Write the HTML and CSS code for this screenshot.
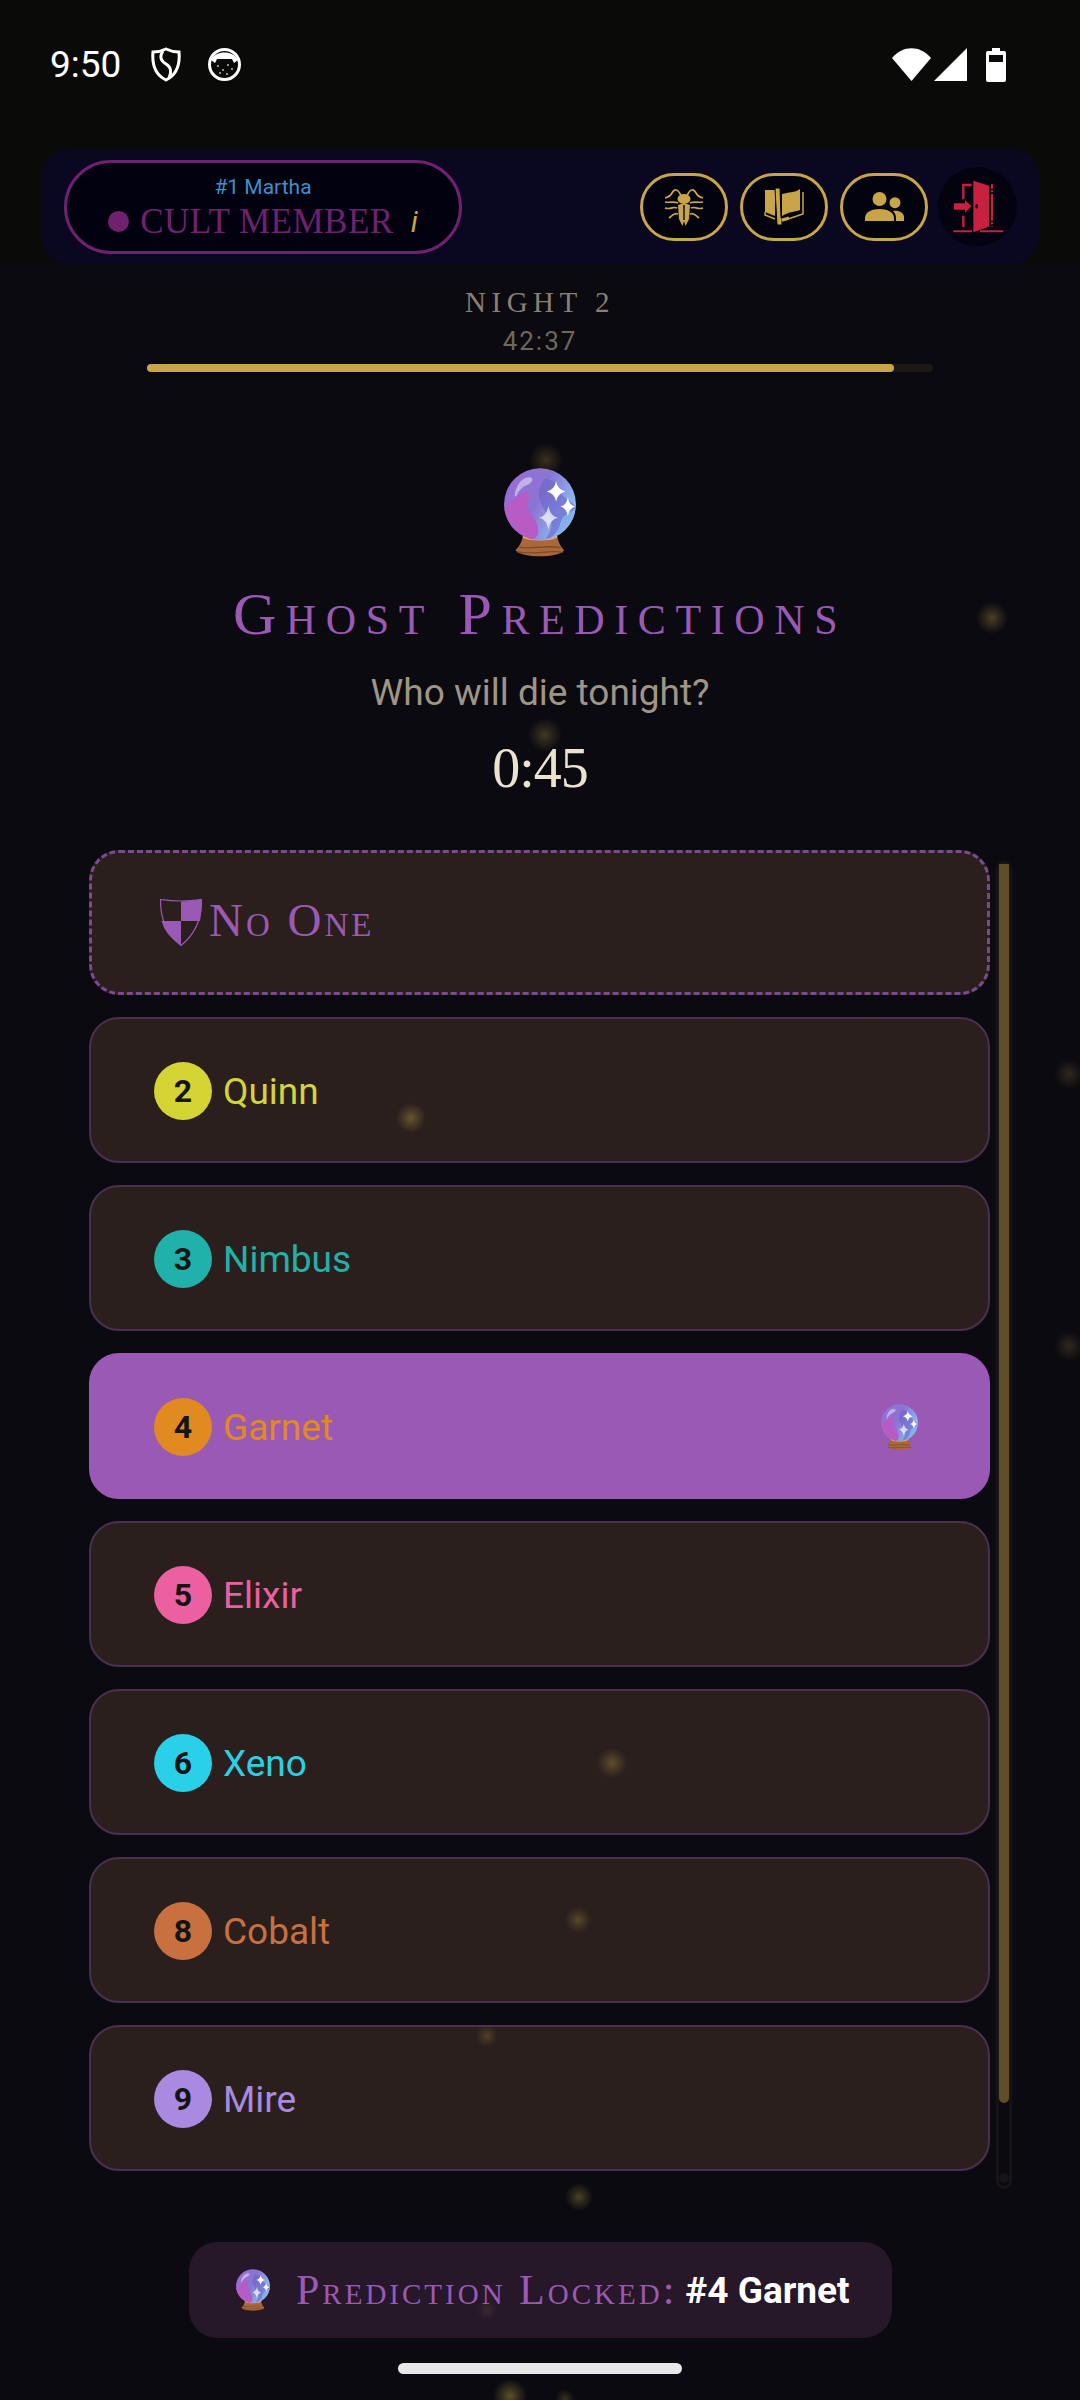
FILE: index.html
```html
<!DOCTYPE html>
<html lang="en">
<head>
  <meta charset="UTF-8" />
  <meta name="viewport" content="width=device-width, initial-scale=1.0"/>
  <title>Ghost Predictions</title>
  <link rel="stylesheet" href="styles.css">
</head>
<body>

  <!-- shared crystal ball -->
  <svg class="defs" aria-hidden="true">
    <defs>
      <linearGradient id="orbBase" x1="0" y1="0" x2="1" y2="0.5">
        <stop offset="0" stop-color="#9a6cd6"/>
        <stop offset="0.55" stop-color="#8a74d4"/>
        <stop offset="1" stop-color="#8cc0f2"/>
      </linearGradient>
      <radialGradient id="glow">
        <stop offset="0" stop-color="#c8a648" stop-opacity="0.5"/>
        <stop offset="0.45" stop-color="#c8a648" stop-opacity="0.26"/>
        <stop offset="1" stop-color="#c8a648" stop-opacity="0"/>
      </radialGradient>
    </defs>
    <symbol id="orb" viewBox="28 27 214 265">
      <path d="M85 226C81 250 72 262 62 272C80 296 190 296 207 272C197 262 190 250 185 226Z" fill="#a8683a"/>
      <path d="M72 262C100 272 150 255 196 264M66 276C110 288 160 270 203 278" fill="none" stroke="#7d4a28" stroke-width="4"/>
      <ellipse cx="135" cy="232" rx="52" ry="11" fill="#f0a468"/>
      <circle cx="135" cy="135" r="107" fill="url(#orbBase)"/>
      <path d="M150 58C122 92 128 130 158 165C178 190 168 215 152 238C200 228 236 190 240 140C216 112 192 112 190 84C182 68 165 60 150 58Z" fill="#6a62c8" opacity="0.6"/>
      <path d="M60 118C82 92 112 92 100 128C90 160 132 178 130 216C132 228 120 238 112 240C70 230 38 195 29 150C36 135 46 128 60 118Z" fill="#b65cc4"/>
      <path d="M196 190C200 170 222 160 240 150C236 190 205 225 165 236C180 225 192 210 196 190Z" fill="#8cc0f2" opacity="0.7"/>
      <path d="M60 105C65 70 90 50 108 55C118 60 110 72 95 78C80 84 72 95 66 108C62 114 58 112 60 105Z" fill="#fff" opacity="0.45"/>
      <path d="M183 67Q188 92 211 97Q188 102 183 127Q178 102 155 97Q178 92 183 67Z" fill="#fff"/>
      <path d="M218 114Q222 138 240 142Q222 146 218 170Q214 146 196 142Q214 138 218 114Z" fill="#fff"/>
      <path d="M160 140Q165 170 188 175Q165 180 160 210Q155 180 132 175Q155 170 160 140Z" fill="#fff" opacity="0.7"/>
    </symbol>
  </svg>

  <div class="top">
    <div class="status">
      <span class="clock">9:50</span>
      <svg class="st-shield" viewBox="0 0 30 35">
        <path d="M15 2C19 4 24 5 28 5C29 16 27 27 15 33C3 27 1 16 2 5C6 5 11 4 15 2Z" fill="none" stroke="#fff" stroke-width="3"/>
        <path d="M12 4C8 10 10 14 15 17C20 20 21 24 18 31" fill="none" stroke="#fff" stroke-width="3"/>
      </svg>
      <svg class="st-cat" viewBox="0 0 33 33">
        <circle cx="16.5" cy="16.5" r="15" fill="#0a0a08" stroke="#fff" stroke-width="3"/>
        <path d="M3 12C7 2 26 2 30 12L26 15L24 11H9L7 15Z" fill="#fff"/>
        <g fill="#bbb">
          <circle cx="10" cy="18" r="1"/><circle cx="15" cy="22" r="1"/><circle cx="20" cy="17" r="1"/>
          <circle cx="24" cy="21" r="1"/><circle cx="12" cy="25" r="1"/><circle cx="19" cy="26" r="1"/>
        </g>
      </svg>
      <span class="spacer"></span>
      <svg class="st-wifi" viewBox="0 0 39 33"><path d="M0 10C11-3 28-3 39 10L19.5 33Z" fill="#fff"/></svg>
      <svg class="st-signal" viewBox="0 0 33 33"><path d="M33 0V33H0Z" fill="#fff"/></svg>
      <svg class="st-battery" viewBox="0 0 20 34">
        <path d="M6 0H14V3H18Q20 3 20 5V32Q20 34 18 34H2Q0 34 0 32V5Q0 3 2 3H6Z" fill="#fff"/>
        <rect x="3" y="7" width="14" height="7" fill="#0a0a08"/>
      </svg>
    </div>

    <header class="hud">
      <div class="role">
        <div class="role-name">#1 Martha</div>
        <div class="role-line">
          <span class="role-dot"></span>
          <span class="role-title">Cult Member</span>
          <i class="role-info">i</i>
        </div>
      </div>
      <div class="hud-actions">
        <button class="hud-btn">
          <svg viewBox="0 0 40 40" width="40" height="40" fill="none" stroke="#c8a648" stroke-width="1.7">
            <path d="M17 9C14 1 10 2 8 6C7 8 5 10 1 11M23 9C26 1 30 2 32 6C33 8 35 10 39 11"/>
            <path d="M14 16C10 14 6 16 1 15M13 21C9 19 7 23 1 21M14 27C10 25 8 29 5 31M26 16C30 14 34 16 39 15M27 21C31 19 33 23 39 21M26 27C30 25 32 29 35 31"/>
            <ellipse cx="20" cy="12" rx="6.500" ry="5" fill="#c8a648" stroke="none"/>
            <path d="M14 18Q20 15 26 18L25 32L21.500 39L20 34L18.500 39L15 32Z" fill="#c8a648" stroke="none"/>
            <path d="M20 18V33" stroke="#04040f" stroke-width="1.4"/>
          </svg>
        </button>
        <button class="hud-btn">
          <svg viewBox="0 0 40 38" width="40" height="38">
            <path d="M1 2V24L11 28V2Z" fill="#c8a648"/>
            <path d="M18 6C24 4 31 5 36 1V22C30 24 24 24 18 28Z" fill="#c8a648"/>
            <path d="M39 4V26L18 33" fill="none" stroke="#c8a648" stroke-width="1.500"/>
            <path d="M1 24V27L11 31" fill="none" stroke="#c8a648" stroke-width="1.500"/>
            <path d="M11 0H16L17 30H18V37H13Z" fill="#c8a648" stroke="#04040f" stroke-width="1"/>
            <path d="M18 32L25 30" stroke="#c8a648" stroke-width="3"/>
          </svg>
        </button>
        <button class="hud-btn">
          <svg viewBox="0 0 39 29" width="39" height="29" fill="#c8a648">
            <circle cx="14.500" cy="7" r="7"/>
            <circle cx="30" cy="10.700" r="5.500"/>
            <path d="M0 29V26C0 20 7 17 14.500 17S29 20 29 26V29Z"/>
            <path d="M28 19C34 18 39 21 39 25V29H31V26C31 23 30 21 28 19Z"/>
          </svg>
        </button>
        <button class="exit-btn">
          <svg viewBox="54 6 237 237" width="79" height="79" fill="#c8203f">
            <path d="M160 47L207 62V185L160 202Z"/>
            <ellipse cx="170" cy="124" rx="4" ry="7" fill="#04040f"/>
            <path d="M155 60H130V103M130 152V186" fill="none" stroke="#c8203f" stroke-width="7"/>
            <path d="M216 57V185" fill="none" stroke="#c8203f" stroke-width="6" stroke-dasharray="14 5 6 5 80 5 6 5 14"/>
            <path d="M100 199H156M180 199H250" fill="none" stroke="#c8203f" stroke-width="6"/>
            <path d="M102 115H135V105L154 124L135 143V134H102Z"/>
          </svg>
        </button>
      </div>
    </header>
  </div>

  <section class="phase">
    <div class="phase-night">Night 2</div>
    <div class="phase-time">42:37</div>
    <div class="progress"><div class="progress-fill"></div></div>
  </section>

  <section class="intro">
    <svg class="orb-lg"><use href="#orb"/></svg>
    <h1>Ghost Predictions</h1>
    <p class="question">Who will die tonight?</p>
    <div class="countdown">0:45</div>
  </section>

  <section class="list-wrap">
    <div class="list">
      <div class="row row-none">
        <svg class="none-shield" viewBox="0 0 42 47">
          <path d="M.5 .5Q21 3.500 41.500 .5Q42 30 21 46.500Q0 30 .5 .5Z" fill="none" stroke="#9b59b6" stroke-width="1.200"/>
          <path d="M21 2.500Q32 2.500 41.500 .5Q42 12 40 22H21Z" fill="#9b59b6"/>
          <path d="M1.500 22H21V46.500Q5 36 1.500 22Z" fill="#9b59b6"/>
        </svg>
        <span class="none-label">No One</span>
      </div>
      <div class="row p2"><span class="badge"><b>2</b></span><span class="name">Quinn</span></div>
      <div class="row p3"><span class="badge"><b>3</b></span><span class="name">Nimbus</span></div>
      <div class="row row-selected p4">
        <span class="badge"><b>4</b></span><span class="name">Garnet</span>
        <svg class="orb-sm"><use href="#orb"/></svg>
      </div>
      <div class="row p5"><span class="badge"><b>5</b></span><span class="name">Elixir</span></div>
      <div class="row p6"><span class="badge"><b>6</b></span><span class="name">Xeno</span></div>
      <div class="row p8"><span class="badge"><b>8</b></span><span class="name">Cobalt</span></div>
      <div class="row p9"><span class="badge"><b>9</b></span><span class="name">Mire</span></div>
    </div>
    <div class="scrollbar"><div class="scrollbar-thumb"></div><div class="scrollbar-end"></div></div>
  </section>

  <footer class="locked">
    <svg class="orb-xs"><use href="#orb"/></svg>
    <span class="locked-label">Prediction Locked:</span>
    <strong class="locked-name">#4 Garnet</strong>
  </footer>

  <div class="home-bar"></div>

  <!-- drifting embers over everything -->
  <svg class="embers" viewBox="0 0 1080 2400" width="1080" height="2400" fill="url(#glow)">
    <circle cx="546" cy="460" r="17" opacity="0.5"/>
    <circle cx="992" cy="618" r="16" opacity="0.7"/>
    <circle cx="545" cy="735" r="17" opacity="0.6"/>
    <circle cx="411" cy="1118" r="15" opacity="0.8"/>
    <circle cx="1069" cy="1074" r="15" opacity="0.4"/>
    <circle cx="1069" cy="1346" r="15" opacity="0.4"/>
    <circle cx="612" cy="1763" r="15" opacity="0.7"/>
    <circle cx="578" cy="1920" r="13" opacity="0.6"/>
    <circle cx="487" cy="2036" r="11" opacity="0.5"/>
    <circle cx="579" cy="2197" r="14" opacity="0.7"/>
    <circle cx="487" cy="2310" r="11" opacity="0.25"/>
    <circle cx="510" cy="2396" r="17" opacity="0.9"/>
    <circle cx="565" cy="2399" r="10" opacity="0.5"/>
  </svg>

</body>
</html>
```

FILE: styles.css
```css
body {
  margin: 0;
  width: 1080px;
  height: 2400px;
  overflow: hidden;
  position: relative;
  background: #0a0a10;
  font-family: Roboto, sans-serif;
}

.defs {
  position: absolute;
  width: 0;
  height: 0;
}

.top {
  background: #0a0a08;
  height: 264px;
}

/* status bar */
.status {
  display: flex;
  align-items: center;
  box-sizing: border-box;
  height: 129px;
  padding: 0 74px 0 50px;
  color: #fff;
}

.clock {
  font-size: 37px;
  margin-right: 30px;
}

.st-shield {
  width: 30px;
  height: 35px;
  margin-right: 27px;
}

.st-cat {
  width: 33px;
  height: 33px;
}

.spacer {
  flex: 1;
}

.st-wifi {
  width: 39px;
  height: 33px;
  margin-right: 3px;
}

.st-signal {
  width: 33px;
  height: 33px;
  margin-right: 19px;
}

.st-battery {
  width: 20px;
  height: 34px;
}

/* top hud */
.hud {
  display: flex;
  align-items: center;
  justify-content: space-between;
  box-sizing: border-box;
  margin: 20px 41px 0;
  height: 115px;
  width: 998px;
  padding: 0 22px 0 23px;
  background: #0a0820;
  border-radius: 28px;
}

.role {
  box-sizing: border-box;
  width: 398px;
  height: 94px;
  border: 3px solid #6f2170;
  border-radius: 47px;
  background: #02010f;
  text-align: center;
}

.role-name {
  margin-top: 11px;
  font-size: 21px;
  line-height: 26px;
  color: #3f8fc8;
}

.role-line {
  display: flex;
  justify-content: center;
  align-items: center;
  gap: 11px;
  line-height: 40px;
  margin-top: 2px;
}

.role-dot {
  width: 21px;
  height: 21px;
  border-radius: 50%;
  background: #6f2170;
}

.role-title {
  font-family: "Liberation Serif", serif;
  font-size: 35px;
  letter-spacing: 0.5px;
  text-transform: uppercase;
  color: #6f2170;
}

.role-info {
  font-family: Roboto, sans-serif;
  font-size: 30px;
  color: #c8a648;
  margin-left: 6px;
}

.hud-actions {
  display: flex;
  align-items: center;
  gap: 12px;
}

.hud-btn {
  display: flex;
  align-items: center;
  justify-content: center;
  box-sizing: border-box;
  width: 88px;
  height: 68px;
  padding: 0;
  background: #03030f;
  border: 3px solid #c8a648;
  border-radius: 34px;
}

.exit-btn {
  display: block;
  width: 79px;
  height: 79px;
  padding: 0;
  margin-left: -2px;
  background: #03030f;
  border: none;
  border-radius: 50%;
}

.exit-btn svg {
  display: block;
}

/* night + timer */
.phase {
  padding-top: 20px;
  text-align: center;
}

.phase-night {
  font-family: "Liberation Serif", serif;
  font-size: 29px;
  line-height: 36px;
  letter-spacing: 5.5px;
  text-transform: uppercase;
  color: #8a7f72;
}

.phase-time {
  margin-top: 6px;
  font-size: 26px;
  line-height: 30px;
  letter-spacing: 2px;
  color: #6f665c;
}

.progress {
  height: 8px;
  margin: 8px 147px 0;
  background: #1c1815;
  border-radius: 4px;
}

.progress-fill {
  width: 95%;
  height: 100%;
  background: #c8a648;
  border-radius: 4px;
}

/* heading */
.intro {
  display: flex;
  flex-direction: column;
  align-items: center;
  padding-top: 96px;
}

.orb-lg {
  display: block;
  width: 72px;
  height: 89px;
}

h1 {
  margin: 22px 0 0;
  font-family: "Liberation Serif", serif;
  font-size: 60px;
  font-weight: normal;
  font-variant: small-caps;
  line-height: 70px;
  letter-spacing: 9.6px;
  color: #9b59b6;
}

.question {
  margin: 22px 0 0;
  font-size: 37px;
  line-height: 44px;
  color: #a09585;
}

.countdown {
  margin-top: 18px;
  font-family: "Liberation Serif", serif;
  font-size: 56px;
  line-height: 70px;
  letter-spacing: -1px;
  color: #ebe3d0;
}

/* player list */
.list-wrap {
  display: flex;
  align-items: flex-start;
  gap: 6px;
  margin: 47px 0 0 89px;
}

.list {
  display: flex;
  flex-direction: column;
  gap: 22px;
  width: 901px;
}

.row {
  display: flex;
  align-items: center;
  box-sizing: border-box;
  height: 146px;
  padding: 2px 70px 0 63px;
  background: #2a1f1c;
  border: 2px solid #4a3050;
  border-radius: 30px;
}

.row-none {
  height: 145px;
  padding: 0 70px 0 68px;
  border: 3px dashed #7d4a90;
}

.none-shield {
  width: 42px;
  height: 47px;
  margin-right: 7px;
}

.none-label {
  margin-bottom: 5px;
  font-family: "Liberation Serif", serif;
  font-size: 47px;
  font-variant: small-caps;
  letter-spacing: 3px;
  color: #9b59b6;
}

.row-selected {
  background: #9b59b6;
  border-color: #9b59b6;
}

.badge {
  display: flex;
  align-items: center;
  justify-content: center;
  flex: none;
  width: 58px;
  height: 58px;
  border-radius: 50%;
  background: currentColor;
}

.badge b {
  font-size: 32px;
  font-weight: 700;
  color: #141414;
}

.name {
  margin-left: 11px;
  font-size: 37px;
}

.orb-sm {
  width: 37px;
  height: 46px;
  margin-left: auto;
}

.p2 { color: #d4d435; }
.p3 { color: #20b2aa; }
.p4 { color: #e08a20; }
.p5 { color: #ec5fa0; }
.p6 { color: #28d0e8; }
.p8 { color: #c87040; }
.p9 { color: #a98ae0; }

.scrollbar {
  box-sizing: border-box;
  position: relative;
  width: 16px;
  height: 1328px;
  margin-top: 11px;
  border: 3px solid #171316;
  border-radius: 8px;
}

.scrollbar-thumb {
  height: 1239px;
  background: #5f4f28;
  border-radius: 0 0 5px 5px;
}

.scrollbar-end {
  position: absolute;
  left: 0;
  bottom: 3px;
  width: 10px;
  height: 10px;
  border-radius: 50%;
  background: #171316;
}

/* locked banner */
.locked {
  display: flex;
  align-items: center;
  box-sizing: border-box;
  width: 703px;
  height: 96px;
  margin: 53px 0 0 189px;
  padding-left: 47px;
  background: #261729;
  border-radius: 28px;
}

.orb-xs {
  width: 34px;
  height: 42px;
  margin-right: 26px;
}

.locked-label {
  font-family: "Liberation Serif", serif;
  font-size: 42px;
  font-variant: small-caps;
  letter-spacing: 3px;
  color: #9b59b6;
}

.locked-name {
  margin-left: 8px;
  font-size: 37px;
  font-weight: 700;
  color: #fff;
}

.home-bar {
  width: 284px;
  height: 11px;
  margin: 25px 0 0 398px;
  background: #e8e8e8;
  border-radius: 6px;
}

.embers {
  position: absolute;
  top: 0;
  left: 0;
  pointer-events: none;
}
```
